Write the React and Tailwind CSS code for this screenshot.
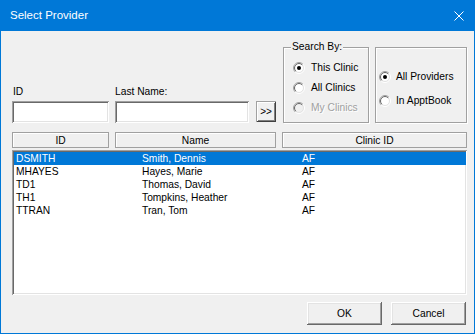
import React from 'react';

const rows = [
    ['DSMITH', 'Smith, Dennis', 'AF'],
    ['MHAYES', 'Hayes, Marie', 'AF'],
    ['TD1', 'Thomas, David', 'AF'],
    ['TH1', 'Tompkins, Heather', 'AF'],
    ['TTRAN', 'Tran, Tom', 'AF'],
];

function Radio({ checked, disabled }) {
    return (
        <svg width="12" height="12" viewBox="0 0 12 12" className="shrink-0">
            <circle cx="6" cy="6" r="5.5" fill="none" stroke="#ffffff" />
            <path d="M2.1 9.9 A5.5 5.5 0 0 1 9.9 2.1" fill="none" stroke="#a0a0a0" />
            <circle cx="6" cy="6" r="4.5" fill={disabled ? '#f0f0f0' : '#ffffff'} stroke="#e3e3e3" />
            <path d="M2.8 9.2 A4.5 4.5 0 0 1 9.2 2.8" fill="none" stroke="#696969" />
            {checked && <circle cx="6" cy="6" r="2" fill="#000000" />}
        </svg>
    );
}

function RadioRow({ label, checked, disabled, gap = 'gap-[6px]' }) {
    return (
        <div className={`flex items-center h-[13px] ${gap}`}>
            <Radio checked={checked} disabled={disabled} />
            <span className={disabled ? 'text-[#a0a0a0] [text-shadow:1px_1px_0_#ffffff]' : ''}>{label}</span>
        </div>
    );
}

const sunken = 'bg-white shadow-[inset_1px_1px_0_#a0a0a0,inset_-1px_-1px_0_#ffffff,inset_2px_2px_0_#696969,inset_-2px_-2px_0_#e3e3e3]';
const raised = 'bg-[#f0f0f0] shadow-[inset_-1px_-1px_0_#696969,inset_1px_1px_0_#ffffff,inset_-2px_-2px_0_#a0a0a0,inset_2px_2px_0_#e3e3e3]';
const groupBox = 'border border-[#a0a0a0] shadow-[inset_1px_1px_0_#ffffff,1px_1px_0_#ffffff]';
const header = 'h-[16px] flex items-center justify-center border border-[#a0a0a0] shadow-[inset_1px_1px_0_#ffffff]';

export default function App() {
    return (
        <div className="w-[475px] h-[334px] bg-[#0078d7] px-[1px] pb-[1px] flex flex-col font-['Liberation_Sans',Arial,sans-serif] text-[10.25px] leading-[13px] text-black">
            {/* Barra de título */}
            <div className="h-[31px] shrink-0 flex items-center justify-between pl-[9px] pr-[10px] text-white text-[11.5px]">
                <span>Select Provider</span>
                <svg width="10" height="10" viewBox="0 0 10 10">
                    <path d="M0.5 0.5 L9.5 9.5 M9.5 0.5 L0.5 9.5" stroke="#ffffff" strokeWidth="1" />
                </svg>
            </div>

            <div className="flex-1 bg-[#f0f0f0] pl-[11px] pr-[7px] flex flex-col">
                {/* Búsqueda */}
                <div className="mt-[16px] h-[76px] flex items-end">
                    <div className="w-[97px] flex flex-col">
                        <span className="pl-[1px] mb-[3px]">ID</span>
                        <div className={`h-[22px] ${sunken}`} />
                    </div>
                    <div className="w-[134px] ml-[6px] flex flex-col">
                        <span className="mb-[3px]">Last Name:</span>
                        <div className={`h-[22px] ${sunken}`} />
                    </div>
                    <button className={`ml-[7px] mb-[1px] w-[20px] h-[21px] flex items-center justify-center text-[10px] shadow-[inset_1px_1px_0_#a0a0a0,inset_-1px_-1px_0_#404040,inset_2px_2px_0_#ffffff,inset_-2px_-2px_0_#808080] bg-[#f0f0f0]`}>
                        &gt;&gt;
                    </button>

                    <div className={`relative ml-[7px] w-[86px] h-[76px] pl-[9px] pt-[13px] flex flex-col gap-[7px] ${groupBox}`}>
                        <span className="absolute -top-[8px] left-[7px] px-[1px] bg-[#f0f0f0]">Search By:</span>
                        <RadioRow label="This Clinic" checked />
                        <RadioRow label="All Clinics" />
                        <RadioRow label="My Clinics" disabled />
                    </div>

                    <div className={`ml-[6px] w-[92px] h-[76px] pl-[3px] pt-[22px] flex flex-col gap-[11px] ${groupBox}`}>
                        <RadioRow label="All Providers" checked gap="gap-[5px]" />
                        <RadioRow label="In ApptBook" gap="gap-[5px]" />
                    </div>
                </div>

                {/* Encabezados */}
                <div className="mt-[9px] flex">
                    <div className={`w-[97px] ${header}`}>ID</div>
                    <div className={`w-[161px] ml-[6px] ${header}`}>Name</div>
                    <div className={`flex-1 ml-[6px] ${header}`}>Clinic ID</div>
                </div>

                {/* Lista */}
                <div className={`mt-[2px] h-[145px] pt-[2px] pl-[2px] pr-[1px] ${sunken}`}>
                    {rows.map(([id, name, clinic], i) => (
                        <div
                            key={id}
                            className={`h-[13px] pl-[2px] flex ${i === 0 ? 'bg-[#0078d7] text-white' : ''}`}
                        >
                            <span className="w-[126px]">{id}</span>
                            <span className="w-[160px]">{name}</span>
                            <span>{clinic}</span>
                        </div>
                    ))}
                </div>

                {/* Botones */}
                <div className="mt-[7px] flex justify-end gap-[9px] pr-[1px]">
                    <button className={`w-[75px] h-[23px] flex items-center justify-center ${raised}`}>OK</button>
                    <button className={`w-[75px] h-[23px] flex items-center justify-center ${raised}`}>Cancel</button>
                </div>
            </div>
        </div>
    );
}
